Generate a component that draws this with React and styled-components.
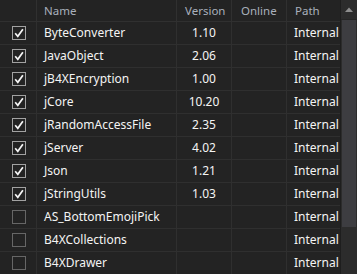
import React from "react";
import styled, { createGlobalStyle } from "styled-components";

const Global = createGlobalStyle`
  html, body { margin: 0; padding: 0; background: #232323; }
  body { font-family: "Noto Sans", "Open Sans", sans-serif; }
`;

const COLS = "37px 140px 55px 55px 53px";

const Frame = styled.div`
  width: 357px;
  height: 274px;
  display: flex;
  overflow: hidden;
  background: #232323;
`;

const Table = styled.div`
  width: 340px;
  display: flex;
  flex-direction: column;
  overflow: hidden;
`;

const HeaderRow = styled.div`
  display: grid;
  grid-template-columns: ${COLS};
  height: 22px;
  flex: 0 0 22px;
  box-sizing: border-box;
  border-bottom: 1px solid #303030;
`;

const HeaderCell = styled.div`
  box-sizing: border-box;
  border-right: ${(p) => (p.$last ? "none" : "1px solid #303030")};
  color: #a9b0bc;
  font-size: 11.5px;
  line-height: 21px;
  padding-left: ${(p) => p.$pad || 7}px;
  white-space: nowrap;
  overflow: hidden;
`;

const Row = styled.div`
  display: grid;
  grid-template-columns: ${COLS};
  height: 23px;
  flex: 0 0 23px;
  box-sizing: border-box;
  border-bottom: 1px solid #2f2f2f;
`;

const Cell = styled.div`
  box-sizing: border-box;
  border-right: ${(p) => (p.$last ? "none" : "1px solid #2f2f2f")};
  color: #f4f4f4;
  font-size: 12px;
  line-height: 22px;
  white-space: nowrap;
  overflow: hidden;
  text-align: ${(p) => p.$align || "left"};
  padding-left: ${(p) => (p.$align === "center" ? 0 : p.$pad ?? 7)}px;
  padding-right: ${(p) => p.$padR ?? 0}px;
`;

const CheckCell = styled.div`
  box-sizing: border-box;
  border-right: 1px solid #2f2f2f;
  display: flex;
  align-items: center;
  padding-left: 12px;
`;

const Box = styled.div`
  width: 14px;
  height: 14px;
  box-sizing: border-box;
  border: 1.5px solid ${(p) => (p.$checked ? "#a2a2a2" : "#666666")};
  display: flex;
  align-items: center;
  justify-content: center;
`;

const Scrollbar = styled.div`
  width: 17px;
  display: flex;
  flex-direction: column;
  background: #2c2c2c;
  border-left: 1px solid #1e1e1e;
  box-sizing: border-box;
`;

const ArrowButton = styled.div`
  height: 19px;
  display: flex;
  align-items: center;
  justify-content: center;
  border-bottom: 1px solid #262626;
`;

const Thumb = styled.div`
  height: 207px;
  margin: 0 1px;
  background: #3d3d41;
`;

const Check = () => (
  <svg width="10" height="10" viewBox="0 0 10 10">
    <path d="M1.2 5.3 L3.8 8.3 L8.9 1.2" fill="none" stroke="#f6f6f6" strokeWidth="1.7" />
  </svg>
);

const rows = [
  ["ByteConverter", "1.10", true],
  ["JavaObject", "2.06", true],
  ["jB4XEncryption", "1.00", true],
  ["jCore", "10.20", true],
  ["jRandomAccessFile", "2.35", true],
  ["jServer", "4.02", true],
  ["Json", "1.21", true],
  ["jStringUtils", "1.03", true],
  ["AS_BottomEmojiPick", "", false],
  ["B4XCollections", "", false],
  ["B4XDrawer", "", false],
];

export default function App() {
  return (
    <Frame>
      <Global />
      <Table>
        <HeaderRow>
          <HeaderCell />
          <HeaderCell>Name</HeaderCell>
          <HeaderCell $pad={8}>Version</HeaderCell>
          <HeaderCell $pad={9}>Online</HeaderCell>
          <HeaderCell $pad={8} $last>Path</HeaderCell>
        </HeaderRow>
        {rows.map(([name, ver, checked]) => (
          <Row key={name}>
            <CheckCell>
              <Box $checked={checked}>{checked && <Check />}</Box>
            </CheckCell>
            <Cell $padR={22}>{name}</Cell>
            <Cell $align="center">{ver}</Cell>
            <Cell />
            <Cell $pad={7} $last>Internal</Cell>
          </Row>
        ))}
      </Table>
      <Scrollbar>
        <ArrowButton>
          <svg width="8" height="5" viewBox="0 0 8 5">
            <path d="M0 5 L4 0.5 L8 5 Z" fill="#8e8e8e" />
          </svg>
        </ArrowButton>
        <Thumb />
      </Scrollbar>
    </Frame>
  );
}
